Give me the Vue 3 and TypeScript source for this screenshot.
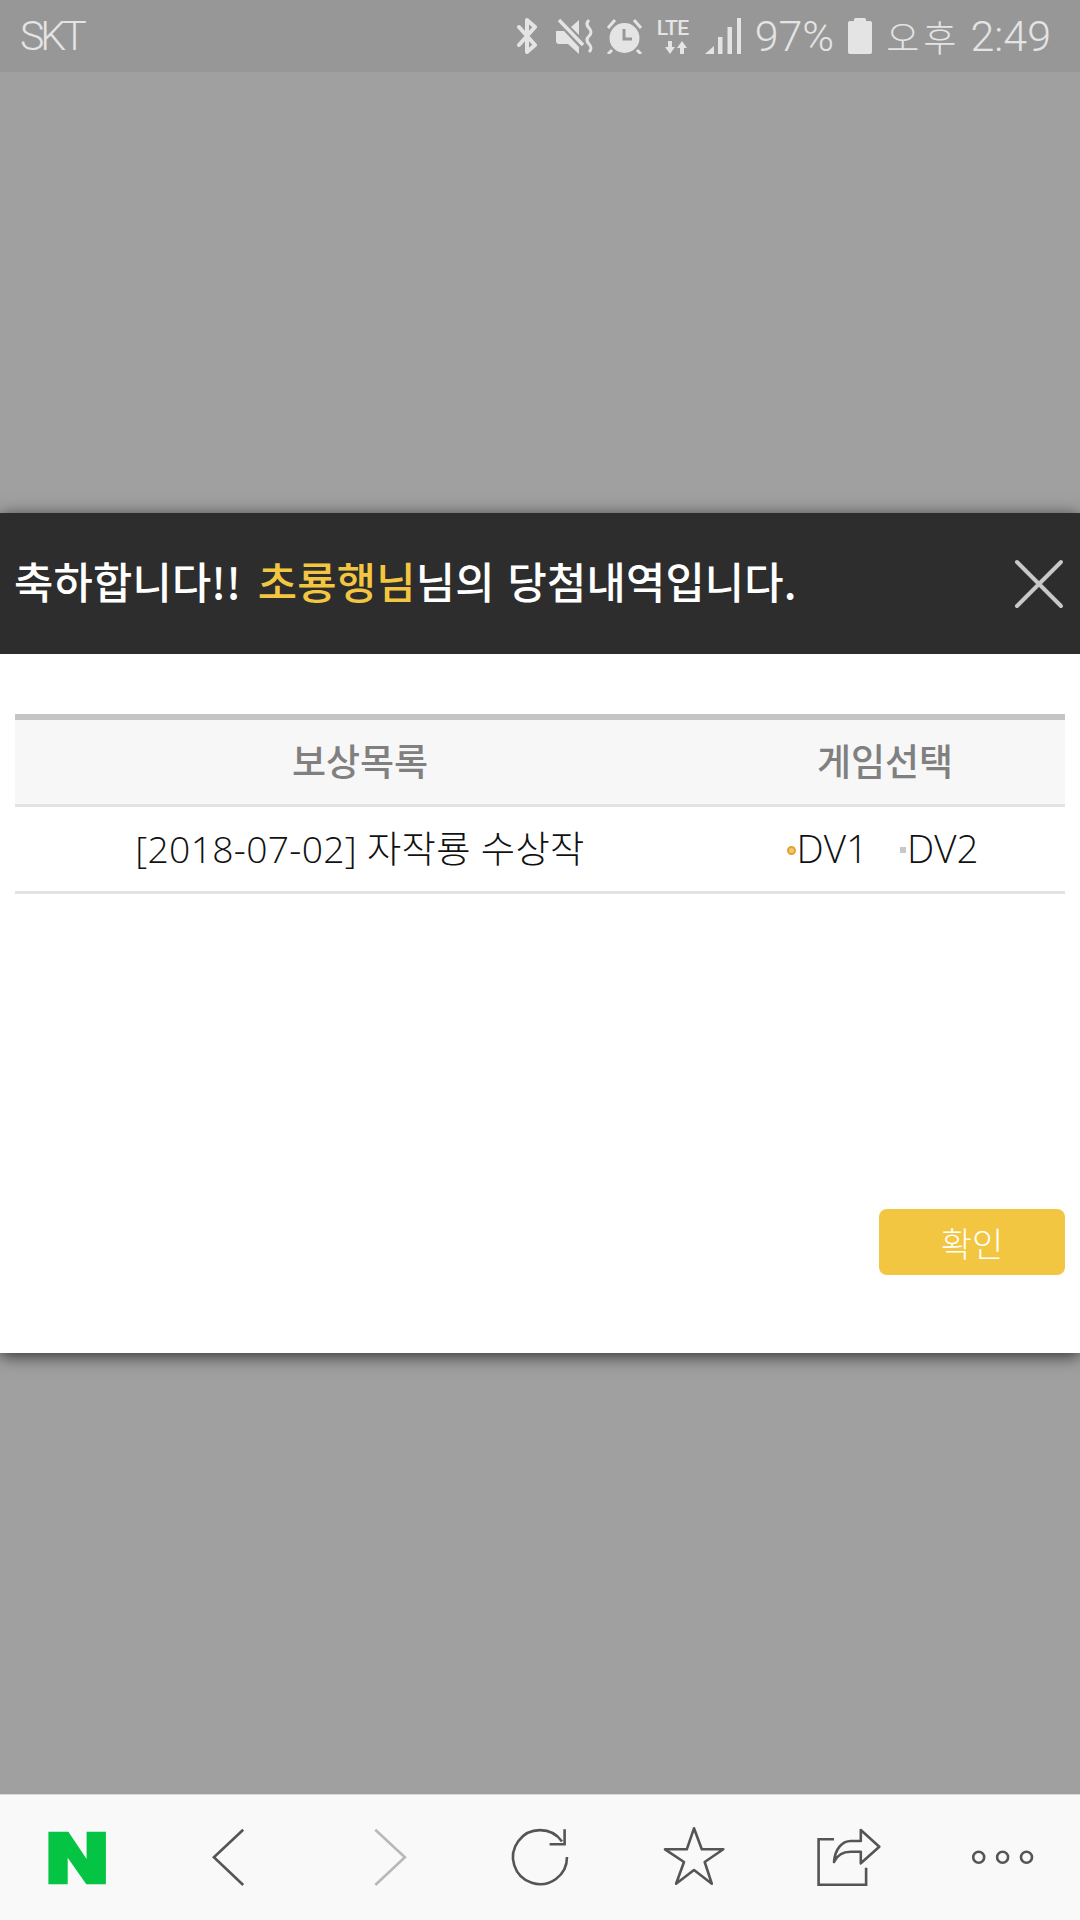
<script setup lang="ts">
const rows = [{ title: '[2018-07-02] 자작룡 수상작' }]
</script>

<template>
  <div class="page">
    <div class="status-bar">
      <span class="carrier">SKT</span>
      <div class="status-icons">
        <svg class="ico-bt" width="23" height="36" viewBox="0 0 23 36">
          <path d="M3 9 L19 27 L11 34 V2 L19 9 L3 27" fill="none" stroke="#e4e4e4" stroke-width="4" stroke-linejoin="round" stroke-linecap="round" />
        </svg>
        <svg class="ico-mute" width="38" height="36" viewBox="0 0 38 36">
          <path d="M0 13 H8 L23 29 V36 L12 26 H3 Q0 26 0 23 Z M15 9 L23 2 V17 Z" fill="#e4e4e4" />
          <path d="M3 2 L27 27" stroke="#e4e4e4" stroke-width="3.5" />
          <path d="M33 2 Q29 6 33 10 T33 18 T33 26 T33 34" fill="none" stroke="#e4e4e4" stroke-width="3" />
        </svg>
        <svg class="ico-alarm" width="37" height="36" viewBox="0 0 37 36">
          <circle cx="18.5" cy="20" r="15" fill="#e4e4e4" />
          <path d="M18 11 V21 H26" fill="none" stroke="#979797" stroke-width="3" />
          <path d="M2 10 L9 2 M35 10 L28 2 M6 32 L2 36 M31 32 L35 36" stroke="#e4e4e4" stroke-width="3" />
        </svg>
        <div class="lte">
          <span class="lte-text">LTE</span>
          <svg width="38" height="13" viewBox="0 0 38 13">
            <path d="M11 0 H15 V6 H18 L13 13 L8 6 H11 Z M23 13 H27 V7 H30 L25 0 L20 7 H23 Z" fill="#e4e4e4" />
          </svg>
        </div>
        <svg class="ico-signal" width="36" height="36" viewBox="0 0 36 36">
          <path d="M0 36 L9 28 V36 Z" fill="#e4e4e4" />
          <rect x="13" y="19" width="4.5" height="17" fill="#e4e4e4" />
          <rect x="22.5" y="9" width="4.5" height="27" fill="#e4e4e4" />
          <rect x="32" y="0" width="4" height="36" fill="#e4e4e4" />
        </svg>
        <span class="status-text batt-pct">97%</span>
        <svg class="ico-batt" width="24" height="36" viewBox="0 0 24 36">
          <rect x="0" y="3" width="24" height="33" rx="2" fill="#e4e4e4" />
          <rect x="6" y="0" width="12" height="5" rx="1.5" fill="#e4e4e4" />
        </svg>
        <span class="status-text ampm">오후</span>
        <span class="status-text clock">2:49</span>
      </div>
    </div>

    <div class="overlay">
      <div class="modal">
        <div class="modal-head">
          <h1 class="modal-title">축하합니다!! <em>초룡행님</em>님의 당첨내역입니다.</h1>
          <button class="modal-close" title="닫기">
            <svg width="50" height="50" viewBox="0 0 50 50">
              <path d="M3 3 L47 47 M47 3 L3 47" stroke="#c8c8c8" stroke-width="4" stroke-linecap="round" />
            </svg>
          </button>
        </div>
        <div class="modal-body">
          <div class="reward-table">
            <div class="reward-row reward-head">
              <div>보상목록</div>
              <div>게임선택</div>
            </div>
            <div v-for="row in rows" :key="row.title" class="reward-row">
              <div>{{ row.title }}</div>
              <div class="games">
                <label class="game"><i class="radio on"></i>DV1</label>
                <label class="game"><i class="radio"></i>DV2</label>
              </div>
            </div>
          </div>
          <div class="modal-actions">
            <button class="confirm">확인</button>
          </div>
        </div>
      </div>
    </div>

    <div class="toolbar">
      <button class="tool">
        <svg width="64" height="64" viewBox="0 0 64 64">
          <path d="M3.4 6.7 H23.4 L41.6 34 V6.7 H60.9 V59.3 H41.3 L22.7 32.7 V59.3 H3.4 Z" fill="#06c443" />
        </svg>
      </button>
      <button class="tool">
        <svg width="64" height="64" viewBox="0 0 64 64">
          <path d="M44.2 4.7 L14.9 32.3 L44.2 60" fill="none" stroke="#555" stroke-width="2.6" />
        </svg>
      </button>
      <button class="tool">
        <svg width="64" height="64" viewBox="0 0 64 64">
          <path d="M21.3 4.7 L50.9 32.3 L21.3 60" fill="none" stroke="#b8b8b8" stroke-width="2.6" />
        </svg>
      </button>
      <button class="tool">
        <svg width="64" height="64" viewBox="0 0 64 64" fill="none" stroke="#555" stroke-width="2.6">
          <path d="M59 32 A27 27 0 1 1 54 16.5" />
          <path d="M56.6 4.3 V19.3 H41.6" />
        </svg>
      </button>
      <button class="tool">
        <svg width="64" height="64" viewBox="0 0 64 64">
          <path d="M32 3.3 L39.8 24.3 H61.3 L42.7 37 L49.8 58.7 L32 45 L14.1 58.7 L22 37 L3 24.3 H24.8 Z" fill="none" stroke="#555" stroke-width="2.6" stroke-linejoin="round" />
        </svg>
      </button>
      <button class="tool">
        <svg width="64" height="64" viewBox="0 0 64 64" fill="none" stroke="#555" stroke-width="2.6">
          <path d="M17 14.3 H1.6 V59.7 H49.1 V42.7" />
          <path d="M17 37 C18 24 25 16 33.8 16 H43.8 V5 L62.3 21.7 L43.8 38.3 V26.7 H33.8 C26 26.7 20 30 17 37 Z" stroke-linejoin="round" />
        </svg>
      </button>
      <button class="tool">
        <svg width="64" height="64" viewBox="0 0 64 64" fill="none" stroke="#555" stroke-width="2.6">
          <circle cx="7.7" cy="32.3" r="5.5" />
          <circle cx="31.6" cy="32.3" r="5.5" />
          <circle cx="55.5" cy="32.3" r="5.5" />
        </svg>
      </button>
    </div>
  </div>
</template>

<style scoped>
.page {
  display: flex;
  flex-direction: column;
  width: 1080px;
  height: 1920px;
  overflow: hidden;
  background: #a0a0a0;
  font-family: "Noto Sans CJK KR", "Noto Sans", sans-serif;
}

.status-bar {
  display: flex;
  align-items: center;
  justify-content: space-between;
  height: 72px;
  padding: 0 29px 0 20px;
  background: #979797;
  color: #e4e4e4;
  flex-shrink: 0;
}

.carrier {
  font-family: Roboto, sans-serif;
  font-size: 41px;
  font-weight: 300;
  line-height: 1;
  letter-spacing: -4px;
}

.status-icons {
  display: flex;
  align-items: center;
  gap: 14px;
}

.ico-mute { margin-left: 3px; }
.ico-alarm { margin-left: -2px; }
.ico-signal { margin-left: -4px; }
.clock { margin-left: -4px; }

.lte {
  display: flex;
  flex-direction: column;
  width: 38px;
  height: 36px;
}

.lte-text {
  font-family: Roboto, sans-serif;
  font-size: 21px;
  font-weight: 500;
  line-height: 20px;
  letter-spacing: -0.5px;
  margin-bottom: 3px;
}

.status-text {
  font-family: Roboto, "Noto Sans CJK KR", sans-serif;
  font-size: 43px;
  font-weight: 300;
  line-height: 1;
}

.ampm {
  font-family: "Noto Sans CJK KR", sans-serif;
  font-size: 36px;
  letter-spacing: 4px;
}

.overlay {
  flex: 1;
  padding-top: 441px;
}

.modal {
  background: #fff;
  box-shadow: 0 3px 16px rgba(0, 0, 0, 0.7);
}

.modal-head {
  display: flex;
  align-items: center;
  justify-content: space-between;
  height: 141px;
  padding: 0 16px 6px 14px;
  box-sizing: border-box;
  background: #2d2d2d;
}

.modal-title {
  margin: 0;
  color: #fff;
  font-size: 42.7px;
  font-weight: 500;
  line-height: 1;
  letter-spacing: 0.2px;
  word-spacing: 3px;
}

.modal-title em {
  margin-left: 4px;
  color: #f2c641;
  font-style: normal;
}

.modal-close {
  display: flex;
  margin-top: 6px;
  padding: 0;
  border: none;
  background: transparent;
}

.modal-close svg {
  filter: blur(0.5px);
}

.modal-body {
  padding: 60px 15px 78px;
}

.reward-table {
  border-top: 6px solid #c4c4c4;
}

.reward-row {
  display: grid;
  grid-template-columns: 690px 360px;
  align-items: center;
  height: 87px;
  padding-bottom: 4px;
  box-sizing: border-box;
  border-bottom: 3px solid #e3e3e3;
  color: #111;
  font-family: "Open Sans", "Noto Sans CJK KR", sans-serif;
  font-size: 37.3px;
  font-weight: 300;
  letter-spacing: 0.3px;
  text-align: center;
}

.reward-head {
  background: #f7f7f7;
  color: #808080;
  font-family: "Noto Sans CJK KR", sans-serif;
  font-size: 37px;
  font-weight: 500;
  letter-spacing: 0;
}

.games {
  display: flex;
  justify-content: center;
  gap: 32px;
  padding-top: 2px;
  padding-right: 5px;
}

.game {
  display: flex;
  align-items: center;
  gap: 1px;
  font-size: 38.5px;
  letter-spacing: 0;
}

.radio {
  flex-shrink: 0;
  width: 6px;
  height: 6px;
  margin-top: 4px;
  background: #c8c8c8;
}

.radio.on {
  width: 9px;
  height: 9px;
  border: 2.5px solid #e3a32b;
  border-radius: 50%;
  box-sizing: border-box;
  background: #efc877;
}

.modal-actions {
  display: flex;
  justify-content: flex-end;
  margin-top: 315px;
}

.confirm {
  width: 186px;
  height: 66px;
  padding: 0;
  border: none;
  border-radius: 8px;
  background: #f2c641;
  color: #fff;
  font-family: "Noto Sans CJK KR", sans-serif;
  font-size: 34px;
  font-weight: 300;
}

.toolbar {
  display: grid;
  grid-template-columns: repeat(7, 1fr);
  align-items: center;
  height: 126px;
  padding-bottom: 2px;
  border-top: 1px solid #d5dcdc;
  background: #f9f9f9;
  flex-shrink: 0;
  box-sizing: border-box;
}

.tool {
  display: flex;
  align-items: center;
  justify-content: center;
  padding: 0;
  border: none;
  background: transparent;
}
</style>
